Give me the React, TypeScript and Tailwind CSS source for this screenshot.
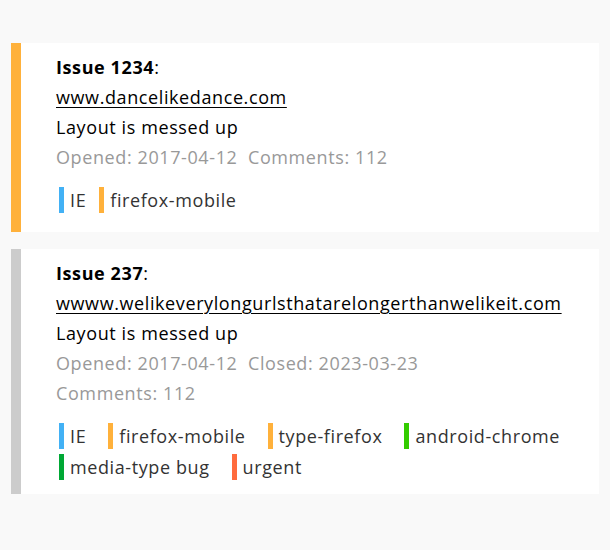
type Tag = { label: string; color: string };

interface Issue {
  id: number;
  url: string;
  title: string;
  opened: string;
  closed?: string;
  comments: number;
  accent: string;
  tagGap: string;
  pad: string;
  tags: Tag[];
}

const issues: Issue[] = [
  {
    id: 1234,
    url: 'www.dancelikedance.com',
    title: 'Layout is messed up',
    opened: '2017-04-12',
    comments: 112,
    accent: 'border-[#ffb13b]',
    tagGap: 'mr-[10px]',
    pad: 'pb-[19px]',
    tags: [
      { label: 'IE', color: 'bg-[#42b1f5]' },
      { label: 'firefox-mobile', color: 'bg-[#ffb13b]' },
    ],
  },
  {
    id: 237,
    url: 'wwww.welikeverylongurlsthatarelongerthanwelikeit.com',
    title: 'Layout is messed up',
    opened: '2017-04-12',
    closed: '2023-03-23',
    comments: 112,
    accent: 'border-[#cccccc]',
    tagGap: 'mr-[19px]',
    pad: 'pb-[14px]',
    tags: [
      { label: 'IE', color: 'bg-[#42b1f5]' },
      { label: 'firefox-mobile', color: 'bg-[#ffb13b]' },
      { label: 'type-firefox', color: 'bg-[#ffb13b]' },
      { label: 'android-chrome', color: 'bg-[#33cc00]' },
      { label: 'media-type bug', color: 'bg-[#00a835]' },
      { label: 'urgent', color: 'bg-[#ff6b3d]' },
    ],
  },
];

const IssueCard = ({ issue }: { issue: Issue }) => (
  <div className={`bg-white border-l-[10px] ${issue.accent} pl-[35px] pr-[4px] pt-[9px] ${issue.pad}`}>
    <div className="leading-[30px]">
      <strong className="font-bold">Issue {issue.id}</strong>:
    </div>
    <div className="leading-[30px]">
      <a href="#" className="underline underline-offset-[3px] decoration-1 text-black">
        {issue.url}
      </a>
    </div>
    <div className="leading-[30px]">{issue.title}</div>
    {issue.closed ? (
      <>
        <div className="leading-[30px] text-[#999999]">
          Opened: {issue.opened}&nbsp; Closed: {issue.closed}
        </div>
        <div className="leading-[30px] text-[#999999]">Comments: {issue.comments}</div>
      </>
    ) : (
      <div className="leading-[30px] text-[#999999]">
        Opened: {issue.opened}&nbsp; Comments: {issue.comments}
      </div>
    )}
    <div className="flex flex-wrap gap-y-[5px] mt-[15px]">
      {issue.tags.map((t) => (
        <span key={t.label} className={`flex items-center h-[26px] ml-[3px] ${issue.tagGap} text-[#333333]`}>
          <span className={`w-[5px] h-[26px] ${t.color}`} />
          <span className="pl-[6px] leading-[26px]">{t.label}</span>
        </span>
      ))}
    </div>
  </div>
);

export default function App() {
  return (
    <div
      className="min-h-[550px] bg-[#f9f9f9] px-[11px] pt-[43px] flex flex-col gap-[17px] text-[18px] tracking-[0.6px] text-black"
      style={{ fontFamily: '"Open Sans", "Noto Sans", sans-serif' }}
    >
      {issues.map((i) => (
        <IssueCard key={i.id} issue={i} />
      ))}
    </div>
  );
}
